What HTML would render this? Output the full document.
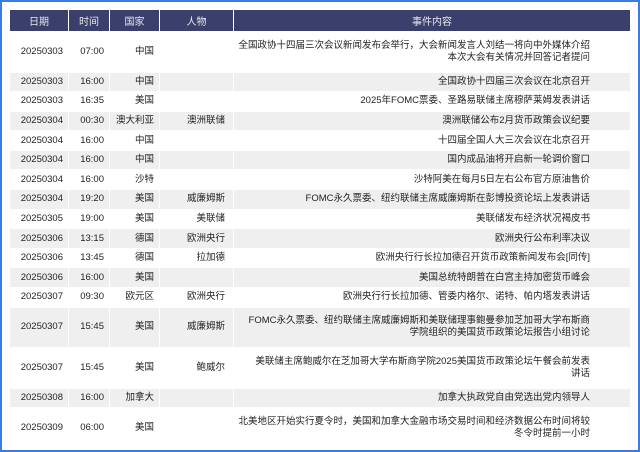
<!DOCTYPE html>
<html><head><meta charset="utf-8"><style>
html,body{margin:0;padding:0;background:#fff}
body{width:640px;height:452px;position:relative;overflow:hidden;font-family:"Liberation Sans","Noto Sans CJK SC",sans-serif}
.frame{position:absolute;left:0;top:0;width:636px;height:448px;border:2px solid #3a7be0}
table{position:absolute;left:9px;top:9px;border-collapse:separate;border-spacing:1px;width:622px;table-layout:fixed;font-size:9.5px;color:#222}
th{background:#3b3f6b;color:#e8e8f0;font-weight:normal;height:19px;font-size:10px}
td{text-align:right;padding:0 5px 0 0;height:18.6px;line-height:12px;white-space:nowrap}
td.e{padding-right:40px}
tr.s td{background:#efefef}
tr.d td{height:39.5px}
</style></head><body>
<div class="frame"></div>
<table>
<colgroup><col style="width:58px"><col style="width:40px"><col style="width:49px"><col style="width:73px"><col></colgroup>
<tr><th>日期</th><th>时间</th><th>国家</th><th>人物</th><th>事件内容</th></tr>
<tr class="d"><td>20250303</td><td>07:00</td><td>中国</td><td></td><td class="e">全国政协十四届三次会议新闻发布会举行，大会新闻发言人刘结一将向中外媒体介绍<br>本次大会有关情况并回答记者提问</td></tr>
<tr class="s"><td>20250303</td><td>16:00</td><td>中国</td><td></td><td class="e">全国政协十四届三次会议在北京召开</td></tr>
<tr><td>20250303</td><td>16:35</td><td>美国</td><td></td><td class="e">2025年FOMC票委、圣路易联储主席穆萨莱姆发表讲话</td></tr>
<tr class="s"><td>20250304</td><td>00:30</td><td>澳大利亚</td><td style="padding-right:8px">澳洲联储</td><td class="e">澳洲联储公布2月货币政策会议纪要</td></tr>
<tr><td>20250304</td><td>16:00</td><td>中国</td><td></td><td class="e">十四届全国人大三次会议在北京召开</td></tr>
<tr class="s"><td>20250304</td><td>16:00</td><td>中国</td><td></td><td class="e">国内成品油将开启新一轮调价窗口</td></tr>
<tr><td>20250304</td><td>16:00</td><td>沙特</td><td></td><td class="e">沙特阿美在每月5日左右公布官方原油售价</td></tr>
<tr class="s"><td>20250304</td><td>19:20</td><td>美国</td><td style="padding-right:8px">威廉姆斯</td><td class="e">FOMC永久票委、纽约联储主席威廉姆斯在彭博投资论坛上发表讲话</td></tr>
<tr><td>20250305</td><td>19:00</td><td>美国</td><td style="padding-right:8px">美联储</td><td class="e">美联储发布经济状况褐皮书</td></tr>
<tr class="s"><td>20250306</td><td>13:15</td><td>德国</td><td style="padding-right:8px">欧洲央行</td><td class="e">欧洲央行公布利率决议</td></tr>
<tr><td>20250306</td><td>13:45</td><td>德国</td><td style="padding-right:8px">拉加德</td><td class="e">欧洲央行行长拉加德召开货币政策新闻发布会[同传]</td></tr>
<tr class="s"><td>20250306</td><td>16:00</td><td>美国</td><td></td><td class="e">美国总统特朗普在白宫主持加密货币峰会</td></tr>
<tr><td>20250307</td><td>09:30</td><td>欧元区</td><td style="padding-right:8px">欧洲央行</td><td class="e">欧洲央行行长拉加德、管委内格尔、诺特、帕内塔发表讲话</td></tr>
<tr class="s d"><td>20250307</td><td>15:45</td><td>美国</td><td style="padding-right:8px">威廉姆斯</td><td class="e">FOMC永久票委、纽约联储主席威廉姆斯和美联储理事鲍曼参加芝加哥大学布斯商<br>学院组织的美国货币政策论坛报告小组讨论</td></tr>
<tr class="d"><td>20250307</td><td>15:45</td><td>美国</td><td style="padding-right:8px">鲍威尔</td><td class="e">美联储主席鲍威尔在芝加哥大学布斯商学院2025美国货币政策论坛午餐会前发表<br>讲话</td></tr>
<tr class="s"><td>20250308</td><td>16:00</td><td>加拿大</td><td></td><td class="e">加拿大执政党自由党选出党内领导人</td></tr>
<tr class="d"><td>20250309</td><td>06:00</td><td>美国</td><td></td><td class="e">北美地区开始实行夏令时，美国和加拿大金融市场交易时间和经济数据公布时间将较<br>冬令时提前一小时</td></tr>
</table>
</body></html>
